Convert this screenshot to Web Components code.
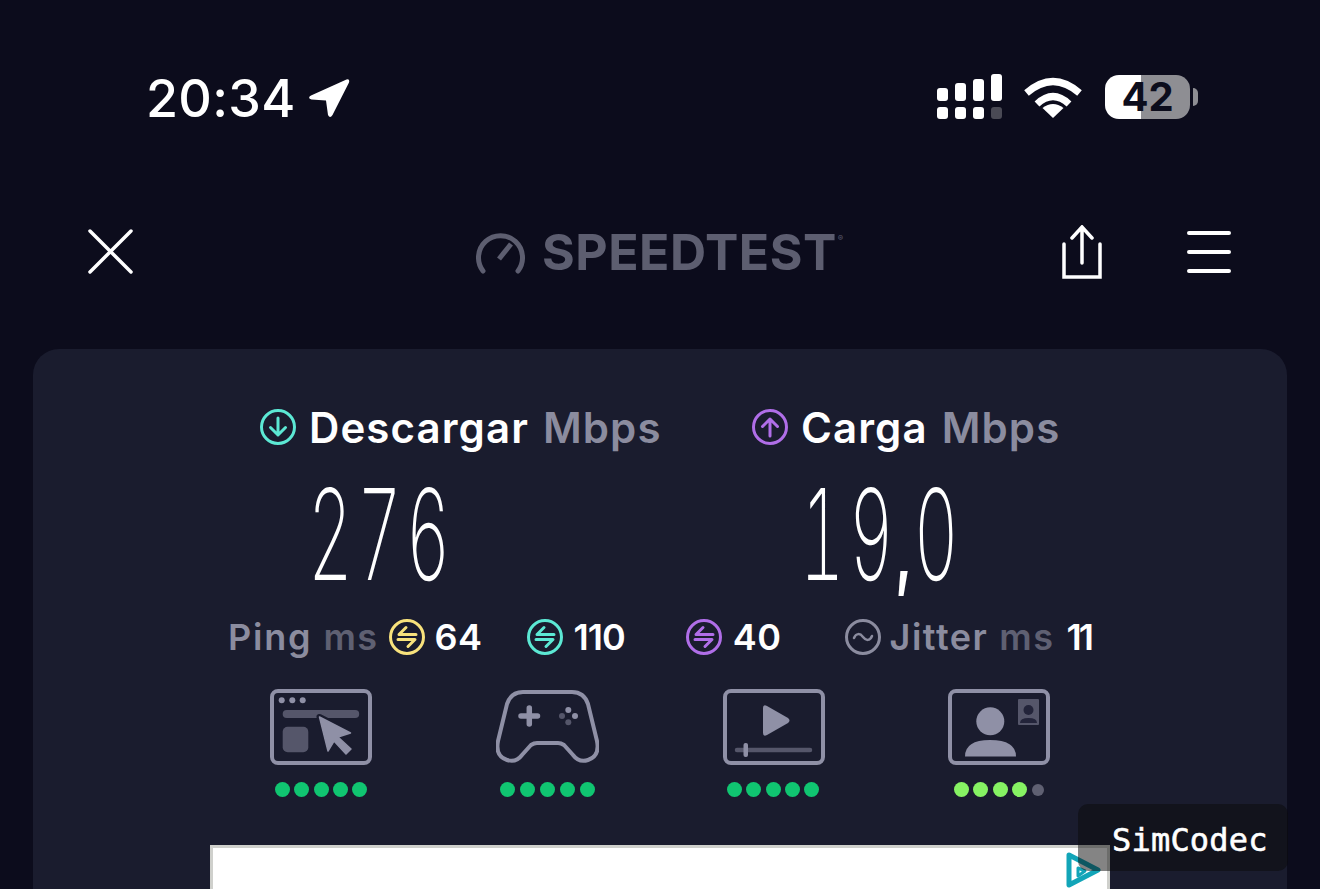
<!DOCTYPE html>
<html lang="es">
<head>
<meta charset="utf-8">
<title>Speedtest</title>
<style>
  html, body { margin: 0; height: 889px; overflow: hidden; background: #0c0c1c; }
  body { font-family: Inter, "Noto Sans", sans-serif; color: #fff; position: relative; }
</style>
</head>
<body>
<st-status></st-status>
<st-nav></st-nav>
<st-card>
  <st-metrics>
    <st-metric label="Descargar" value="276" color="#5ce8d4" dir="down"></st-metric>
    <st-metric label="Carga" value="19,0" color="#b06ee8" dir="up" nudge="48"></st-metric>
  </st-metrics>
  <st-latency></st-latency>
  <st-apps>
    <st-app kind="web"></st-app>
    <st-app kind="game"></st-app>
    <st-app kind="video"></st-app>
    <st-app kind="call" rating="4"></st-app>
  </st-apps>
  <st-ad></st-ad>
</st-card>
<st-watermark>SimCodec</st-watermark>

<script>
const FRAME = `<rect x="2" y="2" width="98" height="72" rx="6" fill="none" stroke="#8f90a6" stroke-width="4"/>`;
const APP_ICONS = {
  web: FRAME + `
    <circle cx="11.7" cy="11.3" r="3" fill="#8f90a6"/><circle cx="22.3" cy="11.3" r="3" fill="#8f90a6"/><circle cx="32.7" cy="11.3" r="3" fill="#8f90a6"/>
    <rect x="12.7" y="21" width="76.500" height="8" rx="4" fill="#55566a"/>
    <rect x="12.7" y="37.700" width="25.600" height="25.600" rx="5" fill="#55566a"/>
    <path d="M49.500 28 80.500 44 68 48 81 60 76 65 64 52 58 62Z" fill="none" stroke="#1a1c2e" stroke-width="6" stroke-linejoin="round"/>
    <path d="M49.500 28 80.500 44 68 48 81 60 76 65 64 52 58 62Z" fill="#8f90a6" stroke="#8f90a6" stroke-width="1.500" stroke-linejoin="round"/>`,
  game: `
    <path d="M27 3H76Q88 3 92 15L101 52Q104 67 92 71 83 74 77 66L68 56Q65 54 62 54H41Q38 54 35 56L26 66Q20 74 11 71-1 67 2 52L11 15Q15 3 27 3Z" fill="none" stroke="#8f90a6" stroke-width="4"/>
    <path d="M33.300 19V35M25 27H41.500" stroke="#8f90a6" stroke-width="5.500" stroke-linecap="round"/>
    <circle cx="72.300" cy="21" r="3" fill="#8f90a6"/><circle cx="79" cy="27" r="3" fill="#8f90a6"/>
    <circle cx="72.300" cy="33.300" r="3" fill="#55566a"/><circle cx="66" cy="27" r="3" fill="#55566a"/>`,
  video: FRAME + `
    <path d="M40 19Q40 15 44 17L65 29Q68 31.500 65 34L44 46Q40 48 40 44Z" fill="#8f90a6"/>
    <path d="M14 61H87" stroke="#55566a" stroke-width="4.500" stroke-linecap="round"/>
    <rect x="20.500" y="54" width="4.500" height="14" rx="2" fill="#8f90a6"/>`,
  call: FRAME + `
    <circle cx="42.300" cy="32.300" r="14" fill="#8f90a6"/>
    <path d="M17 67.500Q17 51 42 51 68 51 68 67.500Z" fill="#8f90a6"/>
    <rect x="70" y="10" width="21" height="26" rx="1" fill="#55566a"/>
    <circle cx="80.500" cy="21" r="5" fill="#23243a"/>
    <path d="M72 34Q72 29 80.500 29 89 29 89 34Z" fill="#23243a"/>`
};

// ad hoc helper, every element below just fills its own shadow root
class Base extends HTMLElement {
  render(html) {
    if (!this.shadowRoot) this.attachShadow({ mode: "open" });
    this.shadowRoot.innerHTML = html;
  }
}

class StStatus extends Base {
  connectedCallback() {
    this.render(`<style>
      :host { display: flex; justify-content: space-between; align-items: center; height: 147px; padding: 49px 122px 0 146px; box-sizing: border-box; }
      .left, .right { display: flex; align-items: center; }
      .time { font-size: 52px; font-weight: 550; line-height: 50px; letter-spacing: .3px; position: relative; top: 1px; }
      .left svg { margin-left: 12px; }
      .right { position: relative; top: -1px; }
      .wifi { margin-left: 21px; }
      .bat { margin-left: 23px; width: 85px; height: 44px; border-radius: 14px; background: linear-gradient(90deg, #fff 36px, #8e8e93 36px); color: #0c0d1c; font-size: 40px; font-weight: 700; line-height: 44px; text-align: center; }
      .nub { margin-left: 3px; width: 5px; height: 18px; border-radius: 0 5px 5px 0; background: #8e8e93; }
    </style>
    <div class="left">
      <span class="time">20:34</span>
      <svg width="42" height="40" viewBox="0 0 42 40"><path d="M38.500 1.500 3 17.500Q-1 20 3.500 21.500L18 22.500 20 37Q22 41 24.500 37L41 4.500Q42 .5 38.500 1.500Z" fill="#fff"/></svg>
    </div>
    <div class="right">
      <svg width="66" height="46" viewBox="0 0 66 46" fill="#fff">
        <rect x="0" y="14" width="11" height="13" rx="3"/><rect x="18" y="9" width="11" height="18" rx="3"/><rect x="36" y="5" width="11" height="22" rx="3"/><rect x="54" y="0" width="11" height="27" rx="3"/>
        <rect x="0" y="33" width="11" height="12" rx="3"/><rect x="18" y="33" width="11" height="12" rx="3"/><rect x="36" y="33" width="11" height="12" rx="3"/><rect x="54" y="33" width="11" height="12" rx="3" fill="#4a4a55"/>
      </svg>
      <svg class="wifi" width="58" height="41" viewBox="0 0 58 41">
        <path d="M2.500 16Q29-7 55.500 16M13 27Q29 12 45 27" fill="none" stroke="#fff" stroke-width="7"/>
        <path d="M29 41 18.500 31Q29 23 39.500 31Z" fill="#fff"/>
      </svg>
      <div class="bat">42</div><div class="nub"></div>
    </div>`);
  }
}

class StNav extends Base {
  connectedCallback() {
    this.render(`<style>
      :host { display: flex; align-items: center; height: 202px; box-sizing: border-box; padding: 6px 89px 0 88px; }
      .logo { display: flex; align-items: center; margin-left: 343px; color: #5d5e70; position: relative; top: 1px; }
      .word { font: 650 50px/56px Inter, sans-serif; letter-spacing: .5px; margin-left: 17px; }
      sup { font-size: 8px; line-height: 0; position: relative; top: -14px; left: 1px; }
      .share { margin-left: auto; position: relative; top: 1px; }
      .menu { margin-left: 85px; position: relative; top: 1px; }
    </style>
    <svg width="45" height="45" viewBox="0 0 45 45"><path d="M2 2 43 43M43 2 2 43" stroke="#fff" stroke-width="3.500" stroke-linecap="round"/></svg>
    <div class="logo">
      <svg width="49" height="44" viewBox="0 0 49 44"><path d="M7 41A22 22 0 1 1 42 41" fill="none" stroke="#5d5e70" stroke-width="5" stroke-linecap="round"/><path d="M35 14 23 29" stroke="#5d5e70" stroke-width="5"/></svg>
      <span class="word">SPEEDTEST</span><sup>®</sup>
    </div>
    <svg class="share" width="40" height="54" viewBox="0 0 40 54" fill="none" stroke="#fff" stroke-width="3.500" stroke-linecap="round" stroke-linejoin="miter"><path d="M20 2V38M10 13 20 2 30 13M2 19V52H38V19"/></svg>
    <svg class="menu" width="44" height="42" viewBox="0 0 44 42" stroke="#fff" stroke-width="4" stroke-linecap="round"><path d="M2 2H42M2 21H42M2 40H42"/></svg>`);
  }
}

class StCard extends Base {
  connectedCallback() {
    this.render(`<style>
      :host { display: block; margin: 0 33px; height: 540px; overflow: hidden; background: #1a1c2e; border-radius: 26px 26px 0 0; padding-top: 56px; box-sizing: border-box; }
    </style><slot></slot>`);
  }
}

class StMetrics extends Base {
  connectedCallback() {
    this.render(`<style>
      :host { display: grid; grid-template-columns: 492px 1fr; padding-left: 227px; }
    </style><slot></slot>`);
  }
}

class StMetric extends Base {
  connectedCallback() {
    const color = this.getAttribute("color");
    const arrow = this.getAttribute("dir") === "down" ? "M18 9V26M10.500 18.500 18 26 25.500 18.500" : "M18 27V10M10.500 17.500 18 10 25.500 17.500";
    const nudge = this.getAttribute("nudge") || 48;
    const value = this.getAttribute("value").replace(",", `<span class="c">,</span>`);
    this.render(`<style>
      :host { display: block; }
      .head { display: flex; align-items: center; height: 44px; font-size: 42px; font-weight: 600; letter-spacing: 1.1px; white-space: nowrap; }
      .unit { color: #8b8c9f; margin-left: 14px; }
      svg { margin-right: 13px; flex: none; }
      .val { margin: 35px 0 0 ${nudge}px; height: 100px; font-size: 126px; font-weight: 220; line-height: 100px; display: inline-block; transform: scaleX(.55); transform-origin: left top; letter-spacing: 7.500px; font-variant-numeric: tabular-nums; }
      .c { font-size: 80px; font-weight: 800; }
    </style>
    <div class="head">
      <svg width="36" height="36" viewBox="0 0 36 36" fill="none" stroke="${color}" stroke-width="3" stroke-linecap="round" stroke-linejoin="round"><circle cx="18" cy="18" r="16.500"/><path d="${arrow}"/></svg>
      <span>${this.getAttribute("label")}</span><span class="unit">Mbps</span>
    </div>
    <div class="val">${value}</div>`);
  }
}

const swapIcon = (c) => `<svg width="36" height="36" viewBox="0 0 36 36" fill="none" stroke="${c}" stroke-width="3" stroke-linecap="round" stroke-linejoin="round"><circle cx="18" cy="18" r="16.500"/><path d="M27 15.500H10L17 8.500M9 20.500H26L19 27.500"/></svg>`;

class StLatency extends Base {
  connectedCallback() {
    this.render(`<style>
      :host { display: flex; align-items: center; height: 44px; margin-top: 31px; padding-left: 195px; font-size: 36px; font-weight: 600; white-space: nowrap; }
      .a { color: #8b8c9f; letter-spacing: 1.800px; }
      .b { color: #5f6072; letter-spacing: 1.500px; }
      i { font-style: normal; display: flex; align-items: center; gap: 11px; }
    </style>
    <span class="a">Ping</span><span class="b" style="margin-left:11px">ms</span>
    <i style="margin-left:10px;gap:10px">${swapIcon("#f8e27c")}<span style="letter-spacing:.5px">64</span></i>
    <i style="margin-left:44px">${swapIcon("#5ce8d4")}<span style="letter-spacing:-1px">110</span></i>
    <i style="margin-left:61px">${swapIcon("#b06ee8")}<span style="letter-spacing:.5px">40</span></i>
    <svg style="margin-left:63px" width="36" height="36" viewBox="0 0 36 36" fill="none" stroke="#8b8c9f" stroke-width="3" stroke-linecap="round"><circle cx="18" cy="18" r="16.500"/><path d="M9 19C11 14 15 14 18 18S25 22 27 17" stroke-width="2.500"/></svg>
    <span class="a" style="margin-left:9px;letter-spacing:1.500px">Jitter</span><span class="b" style="margin-left:11px">ms</span><span style="margin-left:12px;letter-spacing:-3px">11</span>`);
  }
}

class StApps extends Base {
  connectedCallback() {
    this.render(`<style>
      :host { display: grid; grid-template-columns: repeat(4, 226px); padding-left: 175px; margin-top: 30px; }
    </style><slot></slot>`);
  }
}

class StApp extends Base {
  connectedCallback() {
    const kind = this.getAttribute("kind");
    const rating = this.getAttribute("rating");
    let dots = "";
    for (let i = 0; i < 5; i++) {
      const cls = !rating ? "g" : i < rating ? "l" : "o";
      dots += `<b class="${cls}"></b>`;
    }
    const wide = kind === "game";
    this.render(`<style>
      :host { display: flex; flex-direction: column; align-items: center; gap: 17px; }
      svg { margin-left: ${kind === "video" ? 2 : 0}px; }
      .dots { display: flex; align-items: center; gap: ${wide ? 5 : 4.25}px; height: 15px; }
      b { width: 15px; height: 15px; border-radius: 50%; }
      .g { background: #10c571; } .l { background: #86f263; } .o { width: 12px; height: 12px; background: #5f6072; margin-left: 1px; }
    </style>
    <svg width="${wide ? 103 : 102}" height="76" viewBox="0 0 ${wide ? 103 : 102} 76">${APP_ICONS[kind]}</svg>
    <div class="dots">${dots}</div>`);
  }
}

class StAd extends Base {
  connectedCallback() {
    this.render(`<style>
      :host { display: block; position: relative; width: 900px; height: 44px; margin: 48px 0 0 177px; box-sizing: border-box; background: #fff; border: solid #cfd0cc; border-width: 3px 3px 0; }
      svg { position: absolute; right: 5px; top: 3px; }
    </style>
    <svg width="36" height="38" viewBox="0 0 36 38" fill="none" stroke="#12a5b8" stroke-width="5" stroke-linejoin="round"><path d="M3 4 32 19 3 34Z"/><path d="M12 17 19 20 12 25Z" stroke-width="3"/></svg>`);
  }
}

class StWatermark extends Base {
  connectedCallback() {
    this.render(`<style>
      :host { position: absolute; left: 1078px; top: 804px; width: 210px; height: 67px; box-sizing: border-box; padding-left: 34px; border-radius: 10px; background: rgba(10,10,10,.5); color: #fff; font: 32px/72px "DejaVu Sans Mono", monospace; letter-spacing: .2px; -webkit-text-stroke: .6px #fff; }
    </style><slot></slot>`);
  }
}

customElements.define("st-status", StStatus);
customElements.define("st-nav", StNav);
customElements.define("st-card", StCard);
customElements.define("st-metrics", StMetrics);
customElements.define("st-metric", StMetric);
customElements.define("st-latency", StLatency);
customElements.define("st-apps", StApps);
customElements.define("st-app", StApp);
customElements.define("st-ad", StAd);
customElements.define("st-watermark", StWatermark);
</script>
</body>
</html>
